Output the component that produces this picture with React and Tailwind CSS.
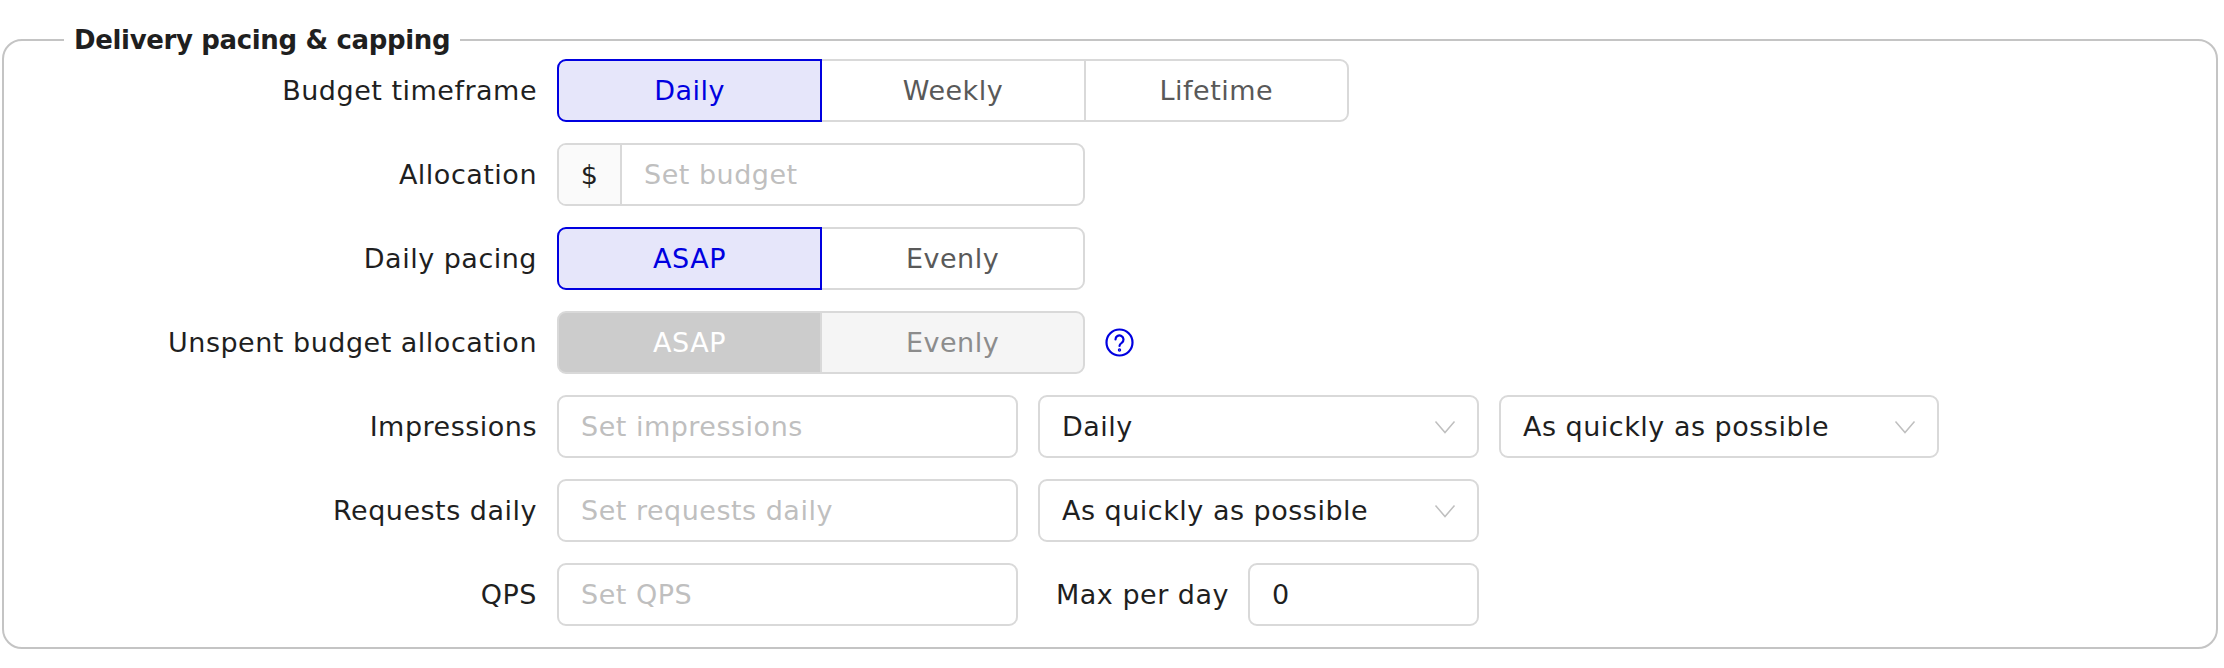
const font = "font-['DejaVu_Sans','Liberation_Sans',sans-serif]";
const box = "h-[63px] rounded-[9px] border-2 border-[#d9d9d9] bg-white";
const text = "text-[27px] tracking-[0.5px] pt-[2px]";

function Label({ children }) {
  return <div className={`w-[551px] shrink-0 pr-[18px] text-right text-[#1f1f1f] ${text}`}>{children}</div>;
}

function Row({ label, children }) {
  return (
    <div className="flex h-[63px] items-center gap-[2px]">
      <Label>{label}</Label>
      <div className="flex items-center gap-[20px]">{children}</div>
    </div>
  );
}

function Segmented({ options, width, disabled }) {
  return (
    <div className="flex h-[63px]" style={{ width }}>
      {options.map((o, i) => {
        const first = i === 0;
        const last = i === options.length - 1;
        const cls = disabled
          ? first
            ? "bg-[#cccccc] border-[#d9d9d9] text-white rounded-l-[9px] z-10"
            : "bg-[#f5f5f5] border-[#d9d9d9] text-[#8c8c8c] rounded-r-[9px] -ml-[2px]"
          : first
            ? "bg-[#e6e6fa] border-[#0000e0] text-[#0000e0] rounded-l-[9px] z-10"
            : `bg-white border-[#d9d9d9] text-[#595959] -ml-[2px] ${last ? "rounded-r-[9px]" : ""}`;
        return (
          <div key={o} className={`relative flex flex-1 items-center justify-center border-2 ${text} ${cls}`}>
            {o}
          </div>
        );
      })}
    </div>
  );
}

function Input({ width, placeholder, value }) {
  return (
    <div className={`${box} flex items-center px-[22px] ${text}`} style={{ width }}>
      {value ? <span className="text-[#1f1f1f]">{value}</span> : <span className="text-[#bfbfbf]">{placeholder}</span>}
    </div>
  );
}

function Select({ width, value }) {
  return (
    <div className={`${box} flex items-center justify-between pl-[22px] pr-[21px] text-[#1f1f1f]`} style={{ width }}>
      <span className={text}>{value}</span>
      <svg width="22" height="14" viewBox="0 0 22 14" fill="none" stroke="#bfbfbf" strokeWidth="1.5">
        <path d="M1.5 1.5 L11 12.5 L20.5 1.5" />
      </svg>
    </div>
  );
}

export default function App() {
  return (
    <div className={`${font} min-h-[668px] bg-white px-[2px] pt-[20px]`}>
      <fieldset className="h-[629px] w-[2216px] rounded-[20px] border-2 border-[#c4c4c4] pl-0">
        <legend className="ml-[60px] h-[40px] px-[10px] text-[26px] leading-[40px] tracking-[-0.35px] font-semibold text-[#1f1f1f]">
          Delivery pacing &amp; capping
        </legend>
        <div className="-mt-[1px] flex flex-col gap-[21px]">
          <Row label="Budget timeframe">
            <Segmented options={["Daily", "Weekly", "Lifetime"]} width={792} />
          </Row>
          <Row label="Allocation">
            <div className={`${box} flex w-[528px] items-center overflow-hidden`}>
              <div className={`flex h-full w-[63px] items-center justify-center border-r-2 border-[#d9d9d9] bg-[#fafafa] text-[#1f1f1f] ${text}`}>$</div>
              <span className={`pl-[22px] text-[#bfbfbf] ${text}`}>Set budget</span>
            </div>
          </Row>
          <Row label="Daily pacing">
            <Segmented options={["ASAP", "Evenly"]} width={528} />
          </Row>
          <Row label="Unspent budget allocation">
            <Segmented options={["ASAP", "Evenly"]} width={528} disabled />
            <svg width="29" height="29" viewBox="0 0 29 29" fill="none" stroke="#0000e0" strokeWidth="2.2" strokeLinecap="round">
              <circle cx="14.5" cy="14.5" r="13" />
              <path d="M10.5 11.5 a4 4 0 1 1 6.2 3.3 c-1.4 0.9 -2.2 1.6 -2.2 3.2" />
              <circle cx="14.5" cy="22" r="0.6" fill="#0000e0" />
            </svg>
          </Row>
          <Row label="Impressions">
            <Input width={461} placeholder="Set impressions" />
            <div className="flex gap-[20px]">
              <Select width={441} value="Daily" />
              <Select width={440} value="As quickly as possible" />
            </div>
          </Row>
          <Row label="Requests daily">
            <Input width={461} placeholder="Set requests daily" />
            <Select width={441} value="As quickly as possible" />
          </Row>
          <Row label="QPS">
            <Input width={461} placeholder="Set QPS" />
            <div className="flex w-[441px] items-center justify-between pl-[18px]">
              <span className={`text-[#1f1f1f] ${text}`}>Max per day</span>
              <Input width={231} value="0" />
            </div>
          </Row>
        </div>
      </fieldset>
    </div>
  );
}
